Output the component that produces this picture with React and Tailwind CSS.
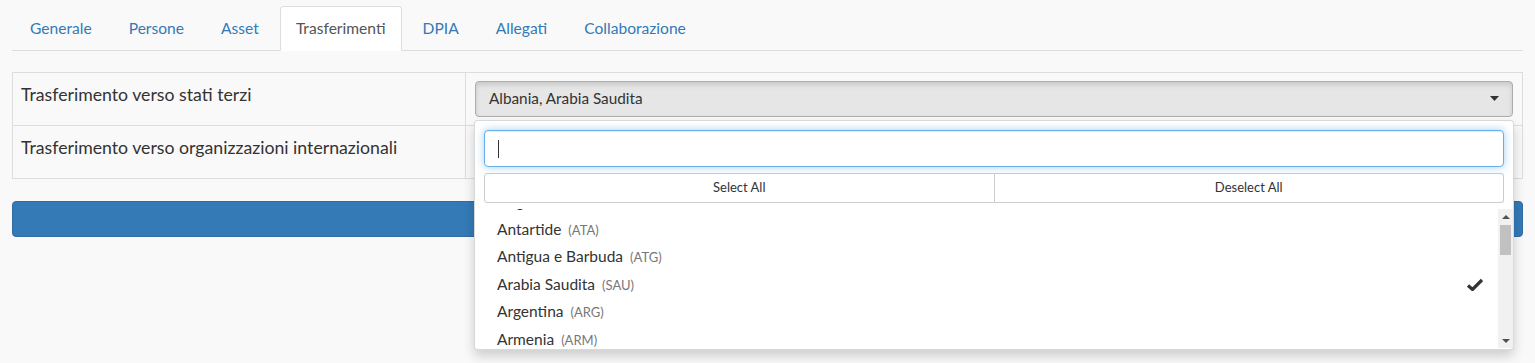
import React from "react";

const tabs = ["Generale", "Persone", "Asset", "Trasferimenti", "DPIA", "Allegati", "Collaborazione"];

const items = [
  { name: "Anguilla", code: "AIA" },
  { name: "Antartide", code: "ATA" },
  { name: "Antigua e Barbuda", code: "ATG" },
  { name: "Arabia Saudita", code: "SAU", checked: true },
  { name: "Argentina", code: "ARG" },
  { name: "Armenia", code: "ARM" },
];

function Caret() {
  return (
    <svg width="9" height="5" viewBox="0 0 9 5" className="block">
      <path d="M0 0 L9 0 L4.5 5 Z" fill="#333" />
    </svg>
  );
}

export default function App() {
  return (
    <div className="relative w-[1535px] h-[363px] overflow-hidden bg-[#f9f9f9] font-['Lato','Liberation_Sans',sans-serif] text-[#333] px-3 pt-[6px]">
      {/* Tabs */}
      <div className="flex items-end border-b border-[#ddd] pl-[2px]">
        {tabs.map((t) => {
          const active = t === "Trasferimenti";
          return (
            <div
              key={t}
              className={
                active
                  ? "h-[45px] -mb-px px-[15px] mr-[5px] flex items-center bg-white border border-[#ddd] border-b-white rounded-t-[4px] text-[15.6px] text-[#555]"
                  : "h-[45px] -mb-px px-[15px] mr-[5px] flex items-center border border-transparent text-[15.6px] text-[#337ab7]"
              }
            >
              {t}
            </div>
          );
        })}
      </div>

      {/* Table */}
      <div className="mt-[21px] border border-[#ddd]">
        <div className="flex border-b border-[#ddd] h-[53px]">
          <div className="w-[453px] shrink-0 border-r border-[#ddd] px-2 pt-[10px] text-[17.7px] leading-[24px]">
            Trasferimento verso stati terzi
          </div>
          <div className="flex-1 px-[9px] pt-[8px]">
            <div className="h-[36px] flex items-center justify-between pl-[13px] pr-[13px] pb-[1px] bg-[#e6e6e6] border border-[#adadad] rounded-[4px] shadow-[inset_0_3px_5px_rgba(0,0,0,0.125)] text-[15.3px]">
              <span>Albania, Arabia Saudita</span>
              <Caret />
            </div>
          </div>
        </div>
        <div className="flex h-[52px]">
          <div className="w-[453px] shrink-0 border-r border-[#ddd] px-2 pt-[10px] text-[17.7px] leading-[24px]">
            Trasferimento verso organizzazioni internazionali
          </div>
          <div className="flex-1 px-[9px] pt-[8px]">
            <div className="h-[36px] flex items-center justify-between pl-[13px] pr-[13px] bg-white border border-[#ccc] rounded-[4px] text-[15px]">
              <span></span>
              <Caret />
            </div>
          </div>
        </div>
      </div>

      {/* Blue button */}
      <div className="mt-[22px] h-[36px] bg-[#337ab7] border border-[#2e6da4] rounded-[4px]"></div>

      {/* Dropdown */}
      <div className="absolute left-[474px] top-[120px] w-[1040px] h-[230px] bg-white border border-[rgba(0,0,0,0.15)] rounded-[4px] shadow-[0_6px_12px_rgba(0,0,0,0.175)] flex flex-col">
        <div className="px-[9px] pt-[9px]">
          <div className="relative h-[37px] bg-white border border-[#66afe9] rounded-[4px] shadow-[inset_0_1px_1px_rgba(0,0,0,0.075),0_0_8px_rgba(102,175,233,0.6)]">
            <div className="absolute left-[13px] top-[9px] w-px h-[18px] bg-[#333]"></div>
          </div>
          <div className="mt-[6px] flex h-[30px] text-[13px]">
            <div className="flex-1 flex items-center justify-center border border-[#ccc] rounded-l-[3px] bg-white">
              Select All
            </div>
            <div className="flex-1 flex items-center justify-center border border-l-0 border-[#ccc] rounded-r-[3px] bg-white">
              Deselect All
            </div>
          </div>
        </div>
        <div className="mt-[6px] flex h-[139px]">
          <div className="flex-1 overflow-hidden">
            <div className="-mt-[21px]">
              {items.map((it) => (
                <div key={it.code} className="h-[27.5px] flex items-center justify-between pl-[22px] pr-[15px]">
                  <span className="text-[15.5px] text-[#333]">
                    {it.name}
                    <span className="ml-[7px] text-[13px] text-[#777]">({it.code})</span>
                  </span>
                  {it.checked && (
                    <svg width="16" height="13" viewBox="0 0 16 13" className="block">
                      <path d="M1 7.5 L5.5 11.5 L15 2" stroke="#333" strokeWidth="3.2" fill="none" strokeLinejoin="miter" />
                    </svg>
                  )}
                </div>
              ))}
            </div>
          </div>
          {/* Scrollbar */}
          <div className="w-[15px] bg-[#f1f1f1] flex flex-col items-center">
            <div className="h-[15px] flex items-center justify-center">
              <svg width="8" height="4" viewBox="0 0 8 4"><path d="M0 4 L8 4 L4 0 Z" fill="#505050" /></svg>
            </div>
            <div className="mt-[1px] w-[11px] h-[30px] bg-[#c1c1c1]"></div>
            <div className="flex-1"></div>
            <div className="h-[15px] flex items-center justify-center">
              <svg width="8" height="4" viewBox="0 0 8 4"><path d="M0 0 L8 0 L4 4 Z" fill="#505050" /></svg>
            </div>
          </div>
        </div>
      </div>
    </div>
  );
}
